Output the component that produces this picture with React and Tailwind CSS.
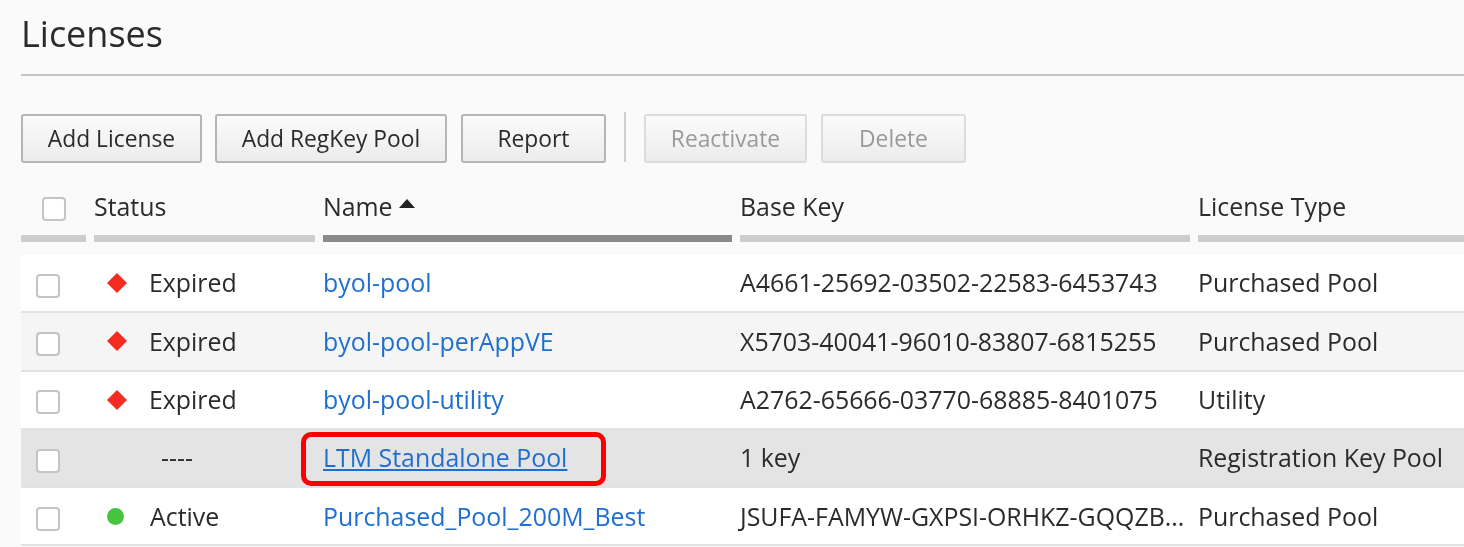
const columns = 'grid grid-cols-[73px_229px_417px_458px_266px]';

const rows = [
  { status: 'Expired', name: 'byol-pool', key: 'A4661-25692-03502-22583-6453743', type: 'Purchased Pool' },
  { status: 'Expired', name: 'byol-pool-perAppVE', key: 'X5703-40041-96010-83807-6815255', type: 'Purchased Pool', bg: 'bg-[#f5f5f5]' },
  { status: 'Expired', name: 'byol-pool-utility', key: 'A2762-65666-03770-68885-8401075', type: 'Utility' },
  { status: '----', name: 'LTM Standalone Pool', key: '1 key', type: 'Registration Key Pool', bg: 'bg-[#e4e4e4]', selected: true },
  { status: 'Active', name: 'Purchased_Pool_200M_Best', key: 'JSUFA-FAMYW-GXPSI-ORHKZ-GQQZB...', type: 'Purchased Pool' },
];

function Checkbox({ className }) {
  return <span className={`block h-[24px] w-[24px] rounded-[4px] border-2 border-[#c4c4c4] bg-white ${className}`} />;
}

function Button({ children, disabled, className }) {
  return (
    <button
      className={`h-[49px] rounded-[3px] border-2 bg-gradient-to-b from-[#fbfbfb] to-[#ececec] pt-[2px] text-[22.8px] ${
        disabled ? 'border-[#dcdcdc] text-[#9a9a9a]' : 'border-[#b5b5b5] text-[#2b2b2b]'
      } ${className}`}
    >
      {children}
    </button>
  );
}

function StatusIcon({ status }) {
  if (status === 'Expired') {
    return (
      <svg width="20" height="20" viewBox="0 0 20 20" className="ml-[13px] shrink-0">
        <path d="M10 0 L20 10 L10 20 L0 10 Z" fill="#f52a20" />
      </svg>
    );
  }
  if (status === 'Active') {
    return <span className="ml-[13px] block h-[17px] w-[17px] shrink-0 rounded-full bg-[#45c43f]" />;
  }
  return null;
}

function HeaderCell({ children, active, last }) {
  return (
    <div className={`flex flex-col ${last ? '' : 'pr-2'}`}>
      <div className="flex h-[56px] items-center text-[24.9px] text-[#2b2b2b]">{children}</div>
      <div className={`h-[7px] ${active ? 'bg-[#8a8a8a]' : 'bg-[#cdcdcd]'}`} />
    </div>
  );
}

export default function App() {
  return (
    <div className="h-[547px] w-[1464px] overflow-hidden bg-[#fafafa] pl-[21px] font-['Open_Sans',sans-serif] blur-[0.6px]">
      <h1 className="flex h-[68px] items-center text-[36px] text-[#2b2b2b]">Licenses</h1>
      <div className="mt-[6px] h-[2px] bg-[#c4c4c4]" />

      {/* Toolbar */}
      <div className="mt-[38px] flex h-[49px] items-start">
        <Button className="w-[181px]">Add License</Button>
        <Button className="ml-[13px] w-[232px]">Add RegKey Pool</Button>
        <Button className="ml-[14px] w-[145px]">Report</Button>
        <div className="-mt-[2px] ml-[18px] h-[50px] w-[2px] bg-[#cfcfcf]" />
        <Button disabled className="ml-[18px] w-[163px]">Reactivate</Button>
        <Button disabled className="ml-[14px] w-[145px]">Delete</Button>
      </div>

      {/* Header */}
      <div className={`${columns} mt-[16px]`}>
        <HeaderCell><Checkbox className="mt-[3px] ml-[21px]" /></HeaderCell>
        <HeaderCell>Status</HeaderCell>
        <HeaderCell active>
          Name
          <svg width="16" height="9" viewBox="0 0 16 9" className="ml-[6px] mb-[8px]"><path d="M8 0 L16 9 L0 9 Z" fill="#222" /></svg>
        </HeaderCell>
        <HeaderCell>Base Key</HeaderCell>
        <HeaderCell last>License Type</HeaderCell>
      </div>

      {/* Rows */}
      <div className="mt-[13px]">
        {rows.map((row) => (
          <div key={row.name} className={`${columns} h-[58.3px] items-center border-b-2 border-[#e2e2e2] text-[24.9px] text-[#2b2b2b] ${row.bg || 'bg-white'}`}>
            <Checkbox className="mt-[5px] ml-[15px]" />
            <div className="flex items-center">
              <StatusIcon status={row.status} />
              <span className={row.status === '----' ? 'ml-[67px]' : row.status === 'Active' ? 'ml-[26px]' : 'ml-[22px]'}>{row.status}</span>
            </div>
            <div className="relative whitespace-nowrap">
              <a className={`text-[#1f6fd0] ${row.selected ? 'underline' : ''}`}>{row.name}</a>
              {row.selected && <span className="absolute left-[-22px] top-[-7px] h-[54px] w-[305px] rounded-[10px] border-[5px] border-[#ff0000]" />}
            </div>
            <div className="whitespace-nowrap">{row.key}</div>
            <div className="whitespace-nowrap">{row.type}</div>
          </div>
        ))}
      </div>
    </div>
  );
}
